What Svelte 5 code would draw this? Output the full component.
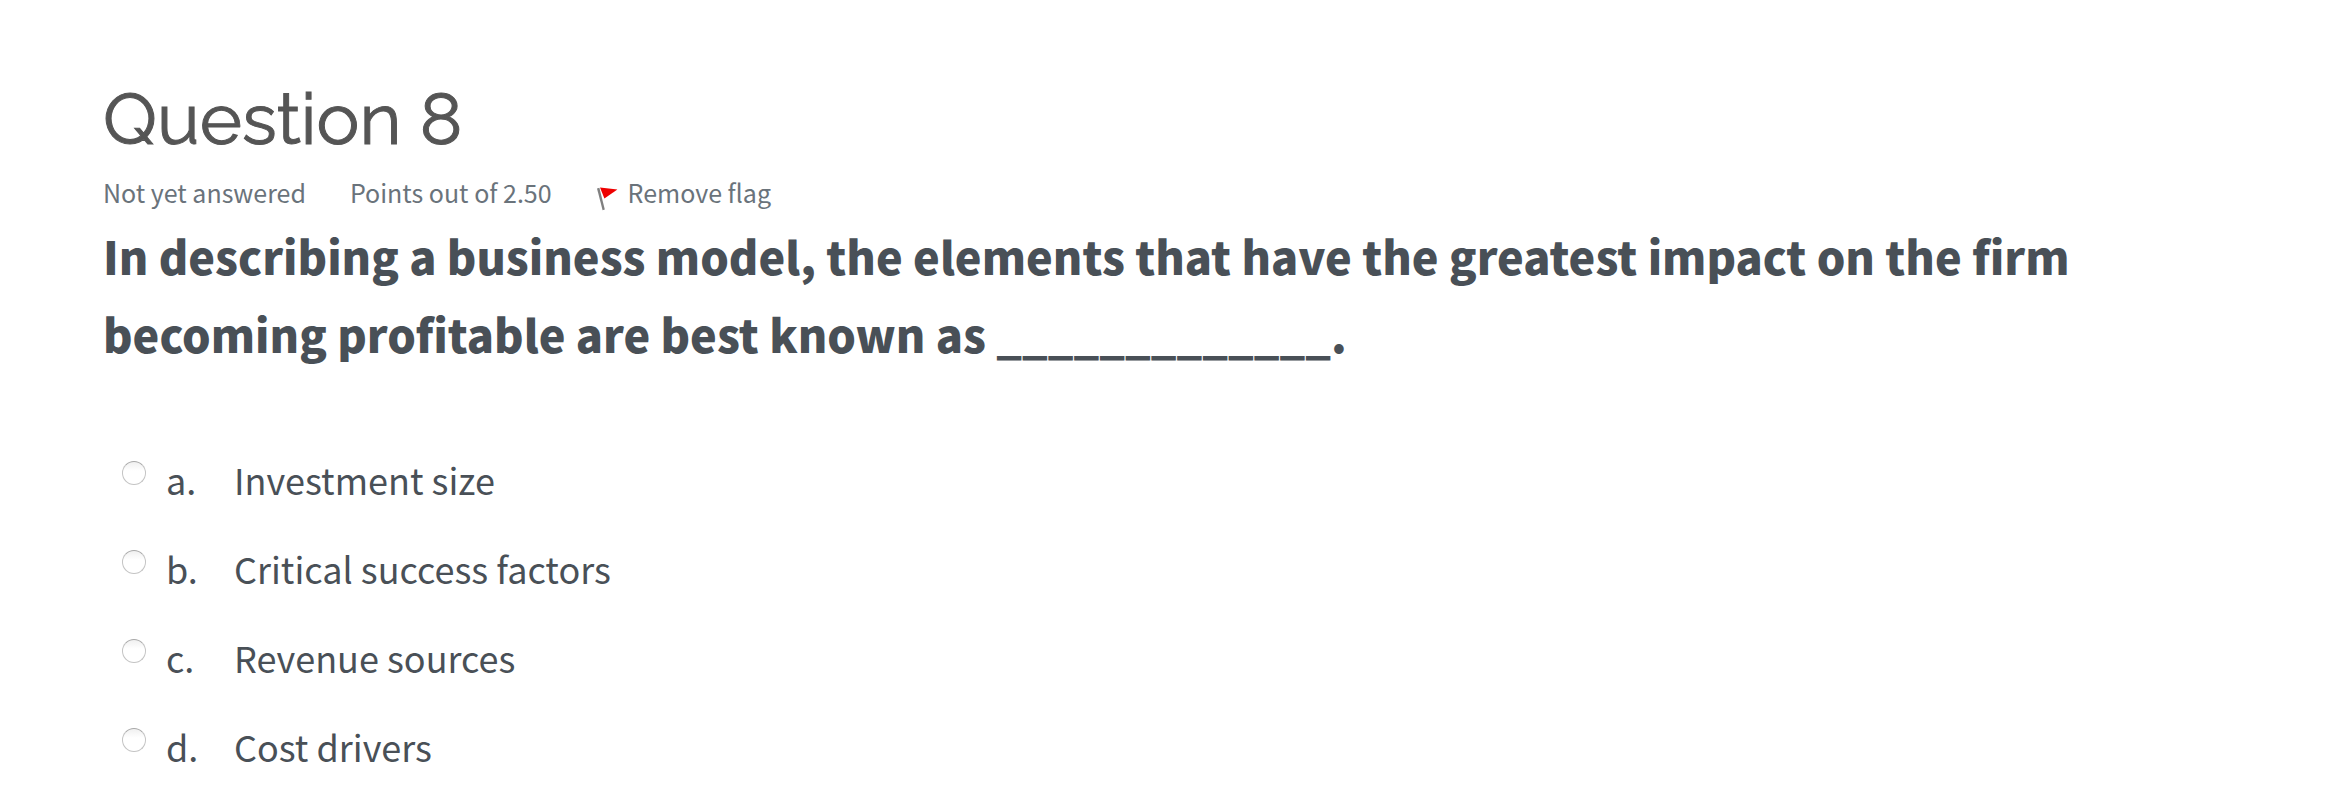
<script>
  let flagged = $state(true);
  let selected = $state(null);

  const choices = [
    { letter: 'a', text: 'Investment size' },
    { letter: 'b', text: 'Critical success factors' },
    { letter: 'c', text: 'Revenue sources' },
    { letter: 'd', text: 'Cost drivers' },
  ];
</script>

<main class="question">
  <header>
    <h1>Question 8</h1>
    <div class="info">
      <span>Not yet answered</span>
      <span>Points out of 2.50</span>
      <button class="flag" type="button" onclick={() => (flagged = !flagged)}>
        <svg class="flag-icon" viewBox="0 0 24 28" aria-hidden="true">
          <path d="M1 5.4 L3.4 4.8 L8.8 26.6 L6.6 27.2 Z" fill="#808080" />
          {#if flagged}
            <path d="M4 4.4 L21.4 6.6 L8.4 15.6 Z" fill="#ee0000" />
          {/if}
        </svg>
        {flagged ? 'Remove flag' : 'Flag question'}
      </button>
    </div>
  </header>

  <fieldset>
    <legend>
      In describing a business model, the elements that have the greatest impact on the firm
      becoming profitable are best known as _____________.
    </legend>
    <div class="answers">
      {#each choices as { letter, text } (letter)}
        <div class="answer">
          <input type="radio" id="choice-{letter}" name="answer" value={letter} bind:group={selected} />
          <label for="choice-{letter}">
            <span class="letter">{letter}.</span>
            <span>{text}</span>
          </label>
        </div>
      {/each}
    </div>
  </fieldset>
</main>

<style>
  :global(body) {
    margin: 0;
    background: #fff;
  }

  .question {
    padding: 77px 103px 32px;
    color: #495057;
    font-family: 'Noto Sans CJK SC', 'Noto Sans', sans-serif;
  }

  h1 {
    margin: 0;
    color: #555;
    font-family: Raleway, Lato, sans-serif;
    font-size: 72px;
    font-weight: 400;
    line-height: 84px;
    -webkit-text-stroke: 1px;
  }

  .info {
    display: flex;
    flex-wrap: wrap;
    gap: 44px;
    margin-top: 12px;
    color: #6a737b;
    font-size: 25px;
    line-height: 38px;
  }

  .flag {
    display: flex;
    align-items: center;
    gap: 8px;
    padding: 0;
    border: 0;
    background: none;
    color: inherit;
    font: inherit;
    cursor: pointer;
  }

  .flag-icon {
    width: 24px;
    height: 28px;
    margin-top: 10px;
  }

  fieldset {
    min-width: 0;
    margin: 6px 0 0;
    padding: 0;
    border: 0;
  }

  legend {
    max-width: 2020px;
    padding: 0;
    font-size: 45px;
    font-weight: 900;
    line-height: 78px;
  }

  .answers {
    display: flex;
    flex-direction: column;
    gap: 29px;
    padding: 76px 0 0 19px;
  }

  .answer {
    display: flex;
    align-items: flex-start;
    gap: 20px;
    font-size: 36px;
    line-height: 60px;
  }

  input {
    appearance: none;
    flex: none;
    width: 24px;
    height: 24px;
    margin: 12px 0 0;
    border: 1px solid #c4c4c4;
    border-top-color: #a8a8a8;
    border-radius: 50%;
    background: linear-gradient(#f0f0f0, #fff 40%);
  }

  input:checked {
    background: radial-gradient(#495057 35%, #fff 40%);
  }

  label {
    display: flex;
  }

  .letter {
    width: 68px;
  }
</style>
